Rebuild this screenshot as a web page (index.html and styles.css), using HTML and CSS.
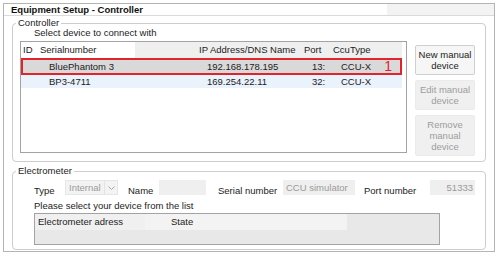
FILE: index.html
```html
<!DOCTYPE html>
<html lang="en">

<head>
    <meta charset="utf-8">
    <title>Equipment Setup - Controller</title>
    <link rel="stylesheet" href="styles.css">
</head>

<body>
    <div class="window">
        <div class="titlebar">Equipment Setup - Controller</div>

        <div class="content">
            <fieldset class="group group-controller">
                <legend>Controller</legend>
                <div class="ctrl-body">
                    <div class="ctrl-left">
                        <p class="hint hint-ctrl">Select device to connect with</p>
                        <div class="devlist">
                            <div class="devrow devhead">
                                <span>ID</span>
                                <span>Serialnumber</span>
                                <span>IP Address/DNS Name</span>
                                <span>Port</span>
                                <span>CcuType</span>
                            </div>
                            <div class="devrow selected">
                                <span></span>
                                <span>BluePhantom 3</span>
                                <span>192.168.178.195</span>
                                <span>13:</span>
                                <span>CCU-X</span>
                                <span class="marker">1</span>
                            </div>
                            <div class="devrow alt">
                                <span></span>
                                <span>BP3-4711</span>
                                <span>169.254.22.11</span>
                                <span>32:</span>
                                <span>CCU-X</span>
                            </div>
                        </div>
                    </div>
                    <div class="buttons">
                        <button class="btn">New manual<br>device</button>
                        <button class="btn" disabled>Edit manual<br>device</button>
                        <button class="btn" disabled>Remove<br>manual<br>device</button>
                    </div>
                </div>
            </fieldset>

            <fieldset class="group group-elec">
                <legend>Electrometer</legend>
                <div class="elec-body">
                    <div class="fields">
                        <span class="lbl lbl-type">Type</span>
                        <div class="field field-type">
                            <span>Internal</span>
                            <span class="drop">
                                <svg width="7" height="4" viewBox="0 0 7 4">
                                    <path d="M0.5 0.5 L3.5 3.5 L6.5 0.5" fill="none" stroke="#a8a8a8" stroke-width="1"/>
                                </svg>
                            </span>
                        </div>
                        <span class="lbl lbl-name">Name</span>
                        <div class="field field-name"></div>
                        <span class="lbl lbl-serial">Serial number</span>
                        <div class="field field-serial">CCU simulator</div>
                        <span class="lbl lbl-port">Port number</span>
                        <div class="field field-port">51333</div>
                    </div>
                    <p class="hint hint-elec">Please select your device from the list</p>
                    <div class="elist">
                        <div class="ehead">
                            <span>Electrometer adress</span>
                            <span class="state">State</span>
                            <span></span>
                        </div>
                    </div>
                </div>
            </fieldset>
        </div>
    </div>
</body>

</html>
```

FILE: styles.css
```css
body {
    margin: 0;
    background-color: #fff;
    font-family: "Liberation Sans", Arial, sans-serif;
    font-size: 9.5px;
    color: #1c1c1c;
}

.window {
    margin: 3px 2px 0 3px;
    height: 249px;
    box-sizing: border-box;
    border: 1px solid #b4b4b4;
}

.titlebar {
    height: 11px;
    line-height: 11px;
    padding-left: 7px;
    font-weight: bold;
    color: #111;
    border-bottom: 1px solid #dadada;
    background: linear-gradient(to right, #fff 383px, #f3f3f3 383px);
}

.content {
    padding: 2px 8px 0 8px;
}

fieldset.group {
    margin: 0;
    padding: 0;
    min-width: 0;
    border: 1px solid #cdcdcd;
    border-radius: 4px;
}

.group legend {
    margin-left: 3px;
    padding: 0 2px;
    line-height: 10px;
}

.group-controller {
    padding-bottom: 7px;
}

.group-elec {
    margin-top: 4px !important;
    padding-bottom: 4px !important;
}

.hint {
    margin: 0;
    line-height: 10px;
}

/* controller */

.ctrl-body {
    display: flex;
    padding-left: 7px;
}

.ctrl-left {
    width: 387px;
}

.hint-ctrl {
    margin: 0 0 3px 14px;
}

.devlist {
    height: 112px;
    box-sizing: border-box;
    border: 1px solid #a3a3a3;
    background-color: #fff;
}

.devrow {
    display: grid;
    grid-template-columns: 17px 159px 105px 29px 1fr;
    width: 381px;
    position: relative;
}

.devrow span {
    padding-left: 10px;
    white-space: nowrap;
    overflow: hidden;
}

.devhead {
    height: 16px;
    line-height: 16px;
    background: linear-gradient(to right, #fff 114px, #efefef 114px);
}

.devhead span {
    padding-left: 2px;
}

.devrow.selected {
    height: 17px;
    line-height: 17px;
    background-color: #d9d9d9;
    outline: 2px solid #e2232c;
    outline-offset: -2px;
}

.devrow.selected span:nth-child(2) {
    padding-left: 11px;
}

.devrow.alt {
    height: 13px;
    line-height: 13px;
    background-color: #eaf2fc;
}

.devrow.alt span:nth-child(2) {
    padding-left: 11px;
}

.devrow .marker {
    position: absolute;
    right: 10px;
    top: 0;
    padding: 0;
    font-size: 14px;
    line-height: 17px;
    color: #e2232c;
}

.buttons {
    margin-left: 8px;
    padding-top: 17px;
    width: 60px;
}

.btn {
    display: block;
    width: 60px;
    margin: 0 0 5px;
    padding: 3px 0;
    font-family: inherit;
    font-size: 9.5px;
    line-height: 11px;
    color: #1c1c1c;
    text-align: center;
    background-color: #f6f6f6;
    border: 1px solid #cfcfcf;
    border-radius: 2px;
}

.btn:disabled {
    color: #9d9d9d;
    background-color: #f0f0f0;
    border-color: #ebebeb;
}

/* electrometer */

.elec-body {
    padding-left: 21px;
}

.fields {
    display: flex;
    margin-top: 4px;
    height: 16px;
}

.lbl {
    margin-top: 5px;
    line-height: 11px;
    white-space: nowrap;
}

.lbl-type {
    width: 31px;
}

.lbl-name {
    width: 31px;
}

.lbl-serial {
    width: 65px;
}

.lbl-port {
    width: 66px;
}

.field {
    height: 15px;
    line-height: 15px;
    box-sizing: border-box;
    padding: 0 3px;
    background-color: #efefef;
    color: #9a9a9a;
    white-space: nowrap;
}

.field-type {
    display: flex;
    justify-content: space-between;
    width: 53px;
    margin-right: 10px;
    background-color: #f3f3f3;
    border: 1px solid #e6e6e6;
    line-height: 13px;
    padding-right: 0;
}

.drop {
    display: flex;
    align-items: center;
    justify-content: center;
    width: 12px;
    border-left: 1px solid #e3e3e3;
}

.field-name {
    width: 47px;
    margin-right: 12px;
}

.field-serial {
    width: 72px;
    margin-right: 9px;
}

.field-port {
    width: 45px;
    text-align: right;
    padding-right: 2px;
}

.hint-elec {
    margin: 5px 0 2px;
}

.elist {
    width: 406px;
    height: 32px;
    box-sizing: border-box;
    border: 1px solid #a3a3a3;
    background-color: #e8e8e8;
}

.ehead {
    display: grid;
    grid-template-columns: 110px 202px 1fr;
    height: 16px;
    line-height: 16px;
}

.ehead span {
    padding-left: 3px;
    background-color: #f0f0f0;
}

.ehead .state {
    padding-left: 26px;
    background-color: #f3f3f3;
}

.ehead span:last-child {
    background-color: transparent;
}
```
